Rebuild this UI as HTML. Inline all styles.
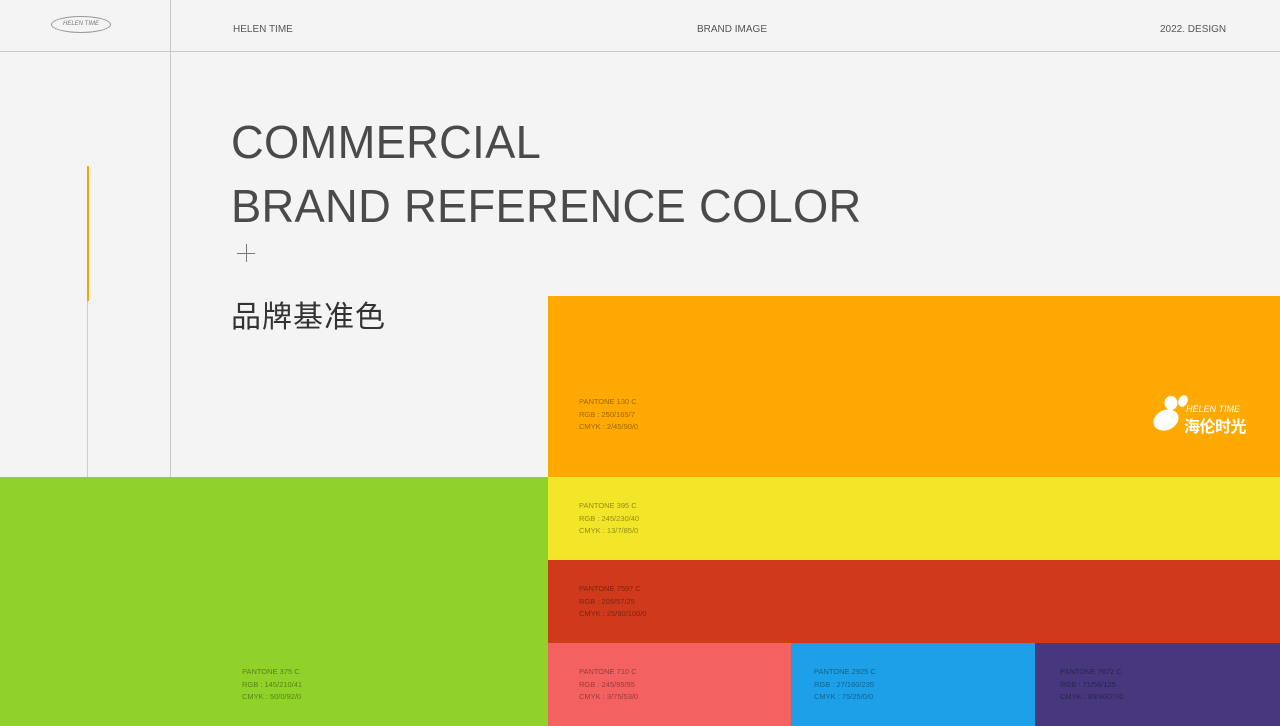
<!DOCTYPE html>
<html><head><meta charset="utf-8"><style>
body{margin:0;width:1280px;height:726px;position:relative;overflow:hidden;background:#f4f4f4;font-family:"Liberation Sans","Noto Sans CJK SC",sans-serif}
.a{position:absolute}
.hd{font-size:10px;color:#555;top:24px}
.blk{position:absolute}
.info{position:absolute;font-size:7.5px;line-height:12.5px;color:rgba(0,0,0,0.4)}
.t{font-size:46px;color:#4a4a4a;font-weight:normal;white-space:nowrap;letter-spacing:0.3px;transform-origin:left top;line-height:50px}
</style></head><body>
<div class="a" style="left:0;top:51px;width:1280px;height:1px;background:#c8c8c8"></div>
<div class="a" style="left:170px;top:0;width:1px;height:477px;background:#c8c8c8"></div>
<div class="a" style="left:51px;top:16px;width:58px;height:15px;border:1px solid #999;border-radius:50%"></div>
<div class="a" style="left:51px;top:19px;width:60px;line-height:10px;text-align:center;font-size:6px;font-style:italic;color:#777">HELEN TIME</div>
<div class="a hd" style="left:233px">HELEN TIME</div>
<div class="a hd" style="left:697px">BRAND IMAGE</div>
<div class="a hd" style="left:1160px">2022. DESIGN</div>
<div class="a" style="left:87px;top:166px;width:2px;height:135px;background:#f6a800"></div>
<div class="a" style="left:87px;top:301px;width:1px;height:176px;background:#ccc"></div>
<div class="a t" style="left:231px;top:117px;transform:scaleX(0.985)">COMMERCIAL</div>
<div class="a t" style="left:231px;top:181px;transform:scaleX(0.985)">BRAND REFERENCE COLOR</div>
<div class="a" style="left:237px;top:253px;width:18px;height:1px;background:#777"></div>
<div class="a" style="left:246px;top:244px;width:1px;height:18px;background:#777"></div>
<div class="a" style="left:231px;top:292px;font-size:30px;color:#333;letter-spacing:1px">品牌基准色</div>

<div class="blk" style="left:548px;top:296px;width:732px;height:181px;background:#ffa902"></div>
<div class="blk" style="left:548px;top:477px;width:732px;height:83px;background:#f3e527"></div>
<div class="blk" style="left:548px;top:560px;width:732px;height:83px;background:#cf3a1c"></div>
<div class="blk" style="left:548px;top:643px;width:243px;height:83px;background:#f46161"></div>
<div class="blk" style="left:791px;top:643px;width:244px;height:83px;background:#1da0e8"></div>
<div class="blk" style="left:1035px;top:643px;width:245px;height:83px;background:#47387e"></div>
<div class="blk" style="left:0;top:477px;width:548px;height:249px;background:#91d22a"></div>

<div class="info" style="left:579px;top:396px">PANTONE 130 C<br>RGB : 250/165/7<br>CMYK : 2/45/90/0</div>
<div class="info" style="left:579px;top:500px">PANTONE 395 C<br>RGB : 245/230/40<br>CMYK : 13/7/85/0</div>
<div class="info" style="left:579px;top:583px">PANTONE 7597 C<br>RGB : 205/57/25<br>CMYK : 25/90/100/0</div>
<div class="info" style="left:579px;top:666px">PANTONE 710 C<br>RGB : 245/95/95<br>CMYK : 3/75/53/0</div>
<div class="info" style="left:814px;top:666px">PANTONE 2925 C<br>RGB : 27/160/235<br>CMYK : 75/25/0/0</div>
<div class="info" style="left:1060px;top:666px">PANTONE 7672 C<br>RGB : 71/56/125<br>CMYK : 85/90/27/0</div>
<div class="info" style="left:242px;top:666px">PANTONE 375 C<br>RGB : 145/210/41<br>CMYK : 50/0/92/0</div>

<svg class="a" style="left:1150px;top:390px" width="40" height="42" viewBox="0 0 40 42">
<ellipse cx="16" cy="30" rx="13" ry="10" fill="#fff" transform="rotate(-25 16 30)"/>
<ellipse cx="21" cy="13" rx="6.5" ry="7" fill="#fff"/>
<ellipse cx="33" cy="11" rx="4.5" ry="6" fill="#fff" transform="rotate(25 33 11)"/>
</svg>
<div class="a" style="left:1186px;top:404px;font-size:9px;font-style:italic;color:#fff">HELEN TIME</div>
<div class="a" style="left:1184px;top:413px;font-size:16px;font-weight:bold;color:#fff;letter-spacing:-0.5px">海伦时光</div>
</body></html>
